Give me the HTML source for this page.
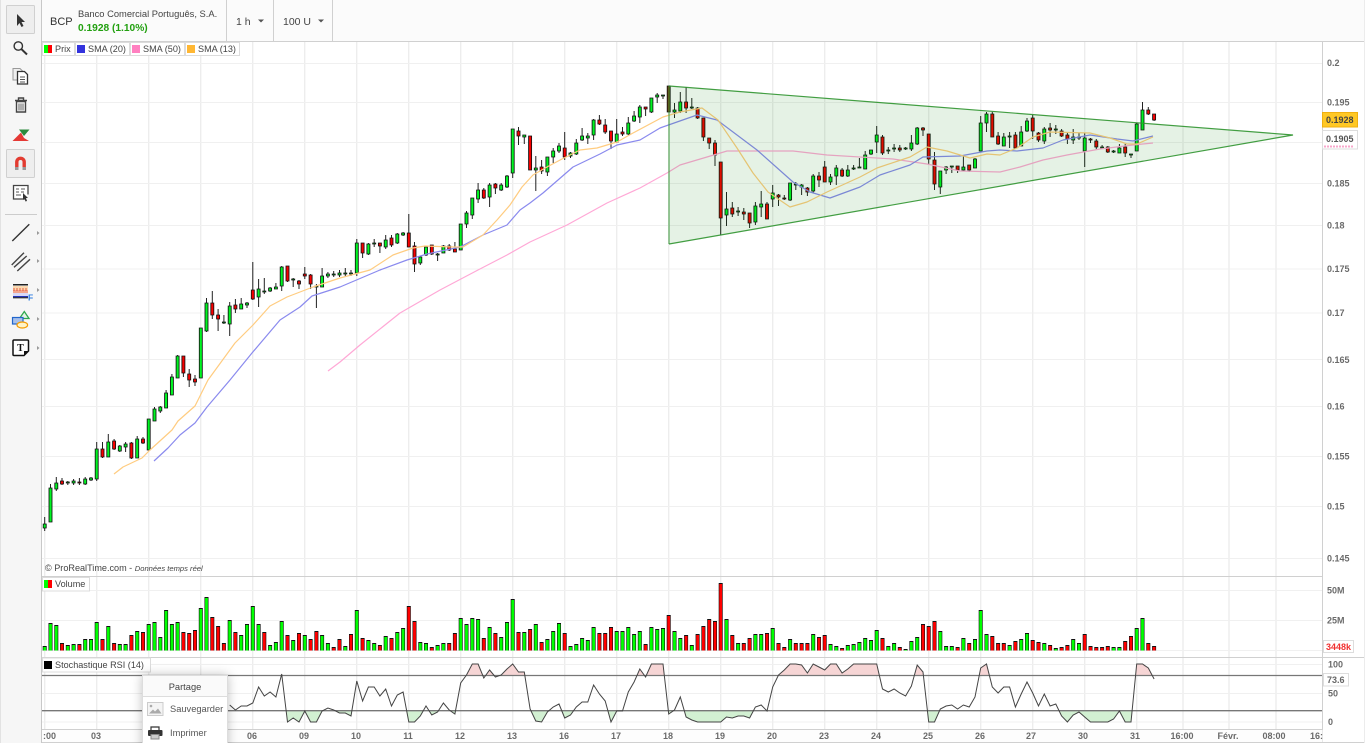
<!DOCTYPE html>
<html><head><meta charset="utf-8"><style>
html,body{margin:0;padding:0;background:#fff;width:1367px;height:753px;overflow:hidden}
#w{position:absolute;left:0;top:0;width:1367px;height:743px;overflow:hidden}
svg{position:absolute;left:0;top:0}
text{font-family:"Liberation Sans",Arial,sans-serif}
.ax{font-size:9px;fill:#6a6a6a;font-weight:bold}
.lg{font-size:9.1px;fill:#444}
#p{position:absolute;left:142px;top:675px;width:84px;height:80px;background:#fff;border:1px solid #ddd;box-shadow:0 0 10px rgba(0,0,0,.25);font-family:"Liberation Sans",Arial,sans-serif;font-size:9.3px;color:#555}
#p .h{height:20px;line-height:22px;text-align:center;background:#fafafa;border-bottom:1px solid #ddd;color:#444}
#p .a{position:absolute;left:27px}
</style></head><body>
<div id="w">
<svg width="1367" height="743" viewBox="0 0 1367 743">
<defs>
<clipPath id="cv"><rect x="42" y="578" width="1280" height="72.5"/></clipPath>
<clipPath id="up"><rect x="42" y="658" width="1280" height="17.5"/></clipPath>
<clipPath id="dn"><rect x="42" y="710.7" width="1280" height="18"/></clipPath>
<path id="st" d="M229.7 693V705L235.4 710L241.2 706L247 706L252.8 703L258.6 687L264.3 696L270.1 692L275.9 697L281.7 674L287.5 722L293.2 718L299 722L304.8 711L310.6 722L316.4 722L322.1 711L327.9 708L333.7 710L339.5 713L345.3 713L351 716L356.8 681L362.6 701L368.4 687L374.2 687L379.9 696L385.7 689L391.5 706L397.3 695L403.1 692L408.8 722L414.5 722L420.3 716L426 706L431.8 715L437.6 712L443.4 703L449.2 710L454.9 714L460.7 683L466.5 675L472.3 664L478.1 664L483.8 678L489.6 670L495.4 677L501.2 675L507 669L512.7 664L518.5 672L524.3 672L530.1 709L535.8 721L541.6 722L547.4 712L553.2 707L559 704L564.7 718L570.5 715L576.3 707L582.1 702L587.8 702L593.6 685L599.4 694L605.2 701L611 722L616.7 711L622.5 711L628.3 692L634.1 682L639.8 669L645.6 677L651.4 664L657.2 664L663 664L668.7 714L674.5 710L680.3 697L686.1 717L691.8 720L697.6 722L703.4 722L709.2 722L715 722L720.7 722L726.5 717L732.3 718L738.1 716L743.8 716L749.6 718L755.4 707L761.2 705L767 711L772.7 687L778.5 675L784.3 670L790.1 664L795.8 664L801.6 665L807.4 673L813.2 664L819 667L824.7 670L830.5 664L836.3 664L842.1 673L847.8 669L853.6 664L859.4 664L865.2 664L871 664L876.7 664L882.5 689L888.3 692L894.1 689L899.8 693L905.6 696L911.4 686L917.2 665L923 672L928.7 722L934.5 722L940.3 709L946.1 706L951.8 705L957.6 709L963.4 705L969.2 707L975 697L980.7 668L986.5 664L992.3 687L998.1 693L1003.8 687L1009.6 687L1015.4 707L1021.2 694L1027 682L1032.7 693L1038.5 706L1044.3 694L1050.1 706L1055.8 704L1061.6 716L1067.4 722L1073.2 715L1079 712L1084.7 717L1090.5 722L1096.3 722L1102.1 722L1107.8 722L1113.6 719L1119.4 711L1125.2 722L1131 722L1136.7 664L1142.5 664L1148.3 668L1154.1 679"/>
<path id="vg" d="M44.7 646V651M50.5 623V651M56.3 625V651M67.8 645V651M73.6 644V651M85.2 639V651M91 639V651M96.7 622V651M108.3 626V651M119.8 644V651M125.6 644V651M137.2 631V651M148.7 624V651M154.5 622V651M160.3 637V651M166.1 610V651M171.9 624V651M177.6 622V651M200.8 608V651M206.5 597V651M229.7 620V651M241.2 635V651M247 624V651M252.8 606V651M258.6 624V651M270.1 645V651M275.9 642V651M281.7 621V651M293.2 640V651M304.8 635V651M322.1 635V651M327.9 643V651M345.3 646V651M356.8 610V651M368.4 640V651M374.2 643V651M385.7 636V651M397.3 632V651M403.1 628V651M420.3 642V651M426 643V651M437.6 645V651M443.4 643V651M460.7 618V651M466.5 624V651M472.3 618V651M478.1 619V651M489.6 627V651M501.2 637V651M507 622V651M512.7 599V651M524.3 632V651M535.8 624V651M547.4 639V651M553.2 631V651M559 623V651M570.5 646V651M576.3 644V651M582.1 638V651M587.8 640V651M593.6 627V651M616.7 631V651M622.5 631V651M628.3 627V651M634.1 634V651M639.8 631V651M651.4 627V651M657.2 629V651M663 628V651M674.5 631V651M680.3 638V651M691.8 645V651M726.5 619V651M738.1 643V651M755.4 634V651M761.2 634V651M772.7 628V651M790.1 639V651M813.2 634V651M830.5 644V651M836.3 646V651M847.8 645V651M853.6 644V651M859.4 642V651M865.2 638V651M871 640V651M876.7 630V651M888.3 646V651M894.1 643V651M905.6 649V651M911.4 641V651M917.2 637V651M940.3 631V651M946.1 646V651M951.8 646V651M963.4 638V651M975 639V651M980.7 610V651M986.5 634V651M1009.6 645V651M1021.2 639V651M1027 633V651M1044.3 643V651M1055.8 648V651M1073.2 639V651M1079 643V651M1113.6 647V651M1119.4 647V651M1136.7 628V651M1142.5 618V651"/>
<path id="vr" d="M62 643V651M79.4 644V651M102.5 639V651M114.1 643V651M131.4 635V651M143 632V651M183.4 632V651M189.2 633V651M195 630V651M212.3 617V651M218.1 626V651M223.9 643V651M235.4 632V651M264.3 632V651M287.5 635V651M299 633V651M310.6 639V651M316.4 631V651M333.7 647V651M339.5 639V651M351 634V651M362.6 638V651M379.9 645V651M391.5 638V651M408.8 606V651M414.5 621V651M431.8 647V651M449.2 643V651M454.9 633V651M483.8 638V651M495.4 633V651M518.5 632V651M530.1 629V651M541.6 642V651M564.7 633V651M599.4 633V651M605.2 633V651M611 627V651M645.6 644V651M668.7 615V651M686.1 635V651M697.6 634V651M703.4 626V651M709.2 619V651M715 621V651M720.7 583V651M732.3 635V651M743.8 643V651M749.6 638V651M767 633V651M778.5 643V651M784.3 647V651M795.8 643V651M801.6 643V651M807.4 643V651M819 637V651M824.7 635V651M842.1 648V651M882.5 638V651M899.8 647V651M923 624V651M928.7 626V651M934.5 621V651M957.6 647V651M969.2 643V651M992.3 636V651M998.1 643V651M1003.8 643V651M1015.4 641V651M1032.7 640V651M1038.5 642V651M1050.1 645V651M1061.6 647V651M1067.4 645V651M1084.7 634V651M1090.5 646V651M1096.3 647V651M1102.1 647V651M1107.8 646V651M1125.2 641V651M1131 636V651M1148.3 643V651M1154.1 646V651"/>
</defs>
<rect width="1367" height="743" fill="#fff"/>
<path stroke="#ededed" stroke-width="1.4" fill="none" d="M44.7 42V729M96.7 42V729M148.7 42V729M200.7 42V729M252.7 42V729M304.7 42V729M356.7 42V729M408.7 42V729M460.7 42V729M512.7 42V729M564.7 42V729M616.7 42V729M668.7 42V729M720.7 42V729M772.7 42V729M824.7 42V729M876.7 42V729M928.7 42V729M980.7 42V729M1032.7 42V729M1084.7 42V729M1136.7 42V729M1183 42V729M1229 42V729M1276 42V729"/>
<path stroke="#f0f0f0" stroke-width="1" fill="none" d="M42 63.5H1322M42 102.5H1322M42 142.5H1322M42 183.5H1322M42 225.5H1322M42 269H1322M42 313H1322M42 359.5H1322M42 406.5H1322M42 456.5H1322M42 506.5H1322M42 558.5H1322M42 590.5H1322M42 620.5H1322M42 650.5H1322M42 664.5H1322M42 693.5H1322M42 722H1322"/>
<g clip-path="url(#cv)">
<use href="#vg" stroke="#111" stroke-width="4" fill="none"/><use href="#vr" stroke="#111" stroke-width="4" fill="none"/>
<use href="#vg" stroke="#00ff00" stroke-width="2.8" fill="none" transform="translate(0 1)"/><use href="#vr" stroke="#ff0000" stroke-width="2.8" fill="none" transform="translate(0 1)"/>
</g>
<path stroke="#222" stroke-width="1" fill="none" d="M44.7 517V531M50.5 484V522M56.3 477V491M62 478V485M67.8 481V485M73.6 479V485M79.4 478V485M85.2 477V485M91 477V481M96.7 442V481M102.5 442V458M108.3 434V457M114.1 439V450M119.8 445V452M125.6 442V452M131.4 442V459M137.2 436V458M143 437V444M154.5 407V421M160.3 406V413M166.1 390V408M171.9 374V395M177.6 355V378M183.4 356V377M189.2 369V387M195 375V386M206.5 298V332M212.3 291V319M218.1 309V331M223.9 315V324M229.7 302V336M235.4 299V313M241.2 298V309M247 302V308M252.8 262V300M258.6 279V307M264.3 278V294M270.1 287V292M275.9 283V289M281.7 266V291M287.5 266V282M293.2 278V287M299 280V289M304.8 267V279M310.6 274V289M316.4 284V308M322.1 268V287M327.9 272V278M333.7 271V277M339.5 270V277M345.3 268V277M351 270V276M356.8 239V276M362.6 243V258M368.4 243V255M374.2 239V247M379.9 243V253M385.7 235V249M391.5 235V247M397.3 233V244M403.1 232V236M408.8 214V247M414.5 242V272M420.3 256V265M426 246V256M431.8 245V255M437.6 253V261M443.4 245V253M449.2 244V251M454.9 242V252M466.5 211V228M472.3 198V219M478.1 183V203M483.8 188V199M489.6 183V207M495.4 183V194M501.2 183V191M507 175V188M512.7 129V178M518.5 127V145M524.3 135V144M535.8 156V191M541.6 160V174M547.4 157V176M553.2 148V163M559 143V153M564.7 132V160M570.5 152V158M576.3 139V155M582.1 128V141M587.8 133V144M593.6 119V140M599.4 115V125M605.2 119V134M611 131V149M616.7 119V143M622.5 127V136M628.3 117V135M634.1 111V122M639.8 105V123M645.6 107V116M651.4 98V113M657.2 93V103M663 95V99M674.5 103V118M680.3 92V113M686.1 87V113M691.8 98V109M697.6 107V119M703.4 118V141M709.2 138V149M715 140V166M720.7 162V235M726.5 192V226M732.3 202V217M738.1 207V216M743.8 208V220M749.6 213V228M755.4 202V225M761.2 191V217M767 202V219M772.7 185V207M778.5 194V206M784.3 195V200M790.1 183V201M795.8 182V190M801.6 184V195M807.4 187V196M813.2 174V193M819 172V187M824.7 161V182M830.5 174V185M836.3 165V185M842.1 168V177M847.8 165V177M853.6 165V170M859.4 158V168M865.2 151V169M871 150V155M876.7 126V153M882.5 135V155M888.3 147V154M894.1 144V152M899.8 145V152M905.6 147V150M911.4 135V151M917.2 127V145M923 127V136M928.7 134V165M934.5 152V190M940.3 171V194M946.1 166V174M951.8 166V173M957.6 166V173M963.4 155V171M969.2 165V172M975 158V168M980.7 116V151M986.5 112V132M992.3 112V137M998.1 132V145M1003.8 133V146M1009.6 132V148M1015.4 132V149M1021.2 126V146M1027 118V132M1032.7 115V139M1038.5 132V142M1044.3 127V144M1050.1 123V137M1055.8 125V134M1061.6 129V137M1067.4 132V144M1073.2 129V144M1079 133V140M1084.7 133V167M1090.5 138V143M1096.3 139V150M1102.1 145V149M1107.8 146V153M1113.6 150V153M1119.4 144V153M1125.2 144V157M1131 154V158M1136.7 123V151M1142.5 102V130M1148.3 107V115M1154.1 114V121"/>
<path fill="#00f522" stroke="#111" stroke-width=".85" d="M44.7 524h1.5v4h-3v-4zM50.5 488h1.5v34h-3v-34zM56.3 483h1.5v6h-3v-6zM67.8 482h1.5v1h-3v-1zM73.6 481h1.5v2h-3v-2zM85.2 479h1.5v5h-3v-5zM91 478h1.5v2h-3v-2zM96.7 449h1.5v30h-3v-30zM108.3 442h1.5v15h-3v-15zM119.8 446h1.5v5h-3v-5zM125.6 444h1.5v3h-3v-3zM137.2 439h1.5v19h-3v-19zM148.7 419h1.5v31h-3v-31zM154.5 409h1.5v12h-3v-12zM160.3 407h1.5v4h-3v-4zM166.1 393h1.5v15h-3v-15zM171.9 377h1.5v18h-3v-18zM177.6 356h1.5v22h-3v-22zM200.8 328h1.5v50h-3v-50zM206.5 303h1.5v28h-3v-28zM223.9 322h1.5v1h-3v-1zM229.7 306h1.5v18h-3v-18zM241.2 304h1.5v5h-3v-5zM247 303h1.5v2h-3v-2zM258.6 289h1.5v8h-3v-8zM264.3 291h1.5v1h-3v-1zM270.1 288h1.5v3h-3v-3zM275.9 287h1.5v2h-3v-2zM281.7 267h1.5v19h-3v-19zM293.2 279h1.5v1h-3v-1zM316.4 286h1.5v1h-3v-1zM322.1 276h1.5v11h-3v-11zM327.9 274h1.5v2h-3v-2zM333.7 274h1.5v1h-3v-1zM339.5 273h1.5v2h-3v-2zM345.3 273h1.5v1h-3v-1zM351 273h1.5v1h-3v-1zM356.8 243h1.5v30h-3v-30zM368.4 244h1.5v10h-3v-10zM374.2 243h1.5v1h-3v-1zM385.7 240h1.5v7h-3v-7zM397.3 234h1.5v9h-3v-9zM403.1 233h1.5v2h-3v-2zM420.3 257h1.5v6h-3v-6zM426 247h1.5v8h-3v-8zM437.6 254h1.5v1h-3v-1zM443.4 246h1.5v7h-3v-7zM460.7 224h1.5v26h-3v-26zM466.5 213h1.5v11h-3v-11zM472.3 198h1.5v17h-3v-17zM478.1 190h1.5v9h-3v-9zM489.6 185h1.5v12h-3v-12zM501.2 185h1.5v5h-3v-5zM507 176h1.5v11h-3v-11zM512.7 129h1.5v44h-3v-44zM524.3 135h1.5v2h-3v-2zM535.8 168h1.5v2h-3v-2zM547.4 157h1.5v15h-3v-15zM553.2 151h1.5v6h-3v-6zM559 146h1.5v5h-3v-5zM570.5 153h1.5v3h-3v-3zM576.3 143h1.5v11h-3v-11zM582.1 136h1.5v4h-3v-4zM587.8 136h1.5v2h-3v-2zM593.6 120h1.5v15h-3v-15zM616.7 134h1.5v8h-3v-8zM628.3 123h1.5v11h-3v-11zM634.1 116h1.5v5h-3v-5zM639.8 107h1.5v10h-3v-10zM651.4 98h1.5v14h-3v-14zM657.2 95h1.5v2h-3v-2zM663 95h1.5v1h-3v-1zM674.5 110h1.5v2h-3v-2zM680.3 102h1.5v9h-3v-9zM691.8 107h1.5v1h-3v-1zM726.5 209h1.5v6h-3v-6zM738.1 211h1.5v1h-3v-1zM755.4 206h1.5v16h-3v-16zM761.2 204h1.5v3h-3v-3zM772.7 193h1.5v6h-3v-6zM790.1 183h1.5v17h-3v-17zM795.8 184h1.5v1h-3v-1zM801.6 185h1.5v2h-3v-2zM813.2 176h1.5v15h-3v-15zM830.5 177h1.5v5h-3v-5zM836.3 168h1.5v8h-3v-8zM847.8 170h1.5v6h-3v-6zM853.6 168h1.5v1h-3v-1zM859.4 167h1.5v1h-3v-1zM865.2 155h1.5v14h-3v-14zM871 150h1.5v4h-3v-4zM876.7 135h1.5v7h-3v-7zM888.3 150h1.5v1h-3v-1zM894.1 148h1.5v1h-3v-1zM905.6 148h1.5v1h-3v-1zM911.4 143h1.5v6h-3v-6zM917.2 128h1.5v16h-3v-16zM940.3 171h1.5v16h-3v-16zM946.1 167h1.5v3h-3v-3zM951.8 166h1.5v1h-3v-1zM963.4 167h1.5v3h-3v-3zM975 159h1.5v9h-3v-9zM980.7 123h1.5v28h-3v-28zM986.5 114h1.5v9h-3v-9zM1003.8 137h1.5v9h-3v-9zM1009.6 136h1.5v1h-3v-1zM1021.2 132h1.5v14h-3v-14zM1027 121h1.5v10h-3v-10zM1044.3 129h1.5v12h-3v-12zM1055.8 129h1.5v1h-3v-1zM1073.2 137h1.5v3h-3v-3zM1079 137h1.5v1h-3v-1zM1084.7 138h1.5v13h-3v-13zM1102.1 147h1.5v1h-3v-1zM1113.6 151h1.5v1h-3v-1zM1119.4 148h1.5v5h-3v-5zM1131 154h1.5v1h-3v-1zM1136.7 124h1.5v27h-3v-27zM1142.5 110h1.5v20h-3v-20z"/>
<path fill="#f80000" stroke="#111" stroke-width=".85" d="M62 481h1.5v3h-3v-3zM79.4 482h1.5v1h-3v-1zM102.5 449h1.5v8h-3v-8zM114.1 441h1.5v8h-3v-8zM131.4 443h1.5v15h-3v-15zM143 439h1.5v4h-3v-4zM183.4 356h1.5v17h-3v-17zM189.2 374h1.5v6h-3v-6zM195 379h1.5v3h-3v-3zM212.3 303h1.5v12h-3v-12zM218.1 315h1.5v4h-3v-4zM235.4 305h1.5v4h-3v-4zM252.8 290h1.5v9h-3v-9zM287.5 266h1.5v15h-3v-15zM299 281h1.5v3h-3v-3zM304.8 274h1.5v2h-3v-2zM310.6 275h1.5v9h-3v-9zM362.6 243h1.5v10h-3v-10zM379.9 243h1.5v3h-3v-3zM391.5 238h1.5v7h-3v-7zM408.8 233h1.5v14h-3v-14zM414.5 246h1.5v18h-3v-18zM431.8 245h1.5v9h-3v-9zM449.2 246h1.5v4h-3v-4zM454.9 249h1.5v3h-3v-3zM483.8 190h1.5v8h-3v-8zM495.4 184h1.5v4h-3v-4zM518.5 131h1.5v5h-3v-5zM530.1 136h1.5v34h-3v-34zM541.6 167h1.5v4h-3v-4zM564.7 148h1.5v9h-3v-9zM599.4 120h1.5v4h-3v-4zM605.2 125h1.5v7h-3v-7zM611 131h1.5v10h-3v-10zM622.5 132h1.5v2h-3v-2zM645.6 107h1.5v2h-3v-2zM686.1 102h1.5v6h-3v-6zM697.6 108h1.5v10h-3v-10zM703.4 118h1.5v19h-3v-19zM709.2 138h1.5v5h-3v-5zM715 143h1.5v12h-3v-12zM720.7 162h1.5v56h-3v-56zM732.3 208h1.5v6h-3v-6zM743.8 212h1.5v2h-3v-2zM749.6 213h1.5v10h-3v-10zM767 204h1.5v15h-3v-15zM778.5 195h1.5v2h-3v-2zM784.3 198h1.5v1h-3v-1zM807.4 188h1.5v4h-3v-4zM819 176h1.5v4h-3v-4zM824.7 167h1.5v15h-3v-15zM842.1 170h1.5v6h-3v-6zM882.5 137h1.5v16h-3v-16zM899.8 148h1.5v2h-3v-2zM923 128h1.5v2h-3v-2zM928.7 134h1.5v25h-3v-25zM934.5 160h1.5v24h-3v-24zM957.6 166h1.5v4h-3v-4zM969.2 165h1.5v5h-3v-5zM992.3 114h1.5v23h-3v-23zM998.1 136h1.5v8h-3v-8zM1015.4 135h1.5v13h-3v-13zM1032.7 118h1.5v13h-3v-13zM1038.5 133h1.5v7h-3v-7zM1050.1 128h1.5v2h-3v-2zM1061.6 131h1.5v5h-3v-5zM1067.4 135h1.5v4h-3v-4zM1090.5 139h1.5v1h-3v-1zM1096.3 141h1.5v6h-3v-6zM1107.8 147h1.5v5h-3v-5zM1125.2 147h1.5v6h-3v-6zM1148.3 110h1.5v4h-3v-4zM1154.1 114h1.5v6h-3v-6z"/>
<path fill="#7a3a10" stroke="#111" stroke-width=".85" d="M668.7 86h1.5v26h-3v-26z"/>
<g fill="none" stroke-width="1.2" stroke-linejoin="round">
<polyline stroke="#ffa8d6" points="328,371 340,362 360,345 400,313 440,290 478,270 507,255 530,242 567,225 607,203 640,188 667,173 680,165 707,157 727,151 760,151 793,151 827,155 893,159 927,164 960,171 1000,172 1020,167 1043,160 1067,155 1100,149 1133,145 1153,143"/>
<polyline stroke="#8a8aee" points="154,461 168,448 180,435 195,423 207,407 230,380 252,353 280,320 300,307 312,296 340,287 380,270 407,260 427,254 460,247 483,235 507,225 520,210 530,203 543,193 573,167 600,154 617,145 640,140 660,128 677,122 697,115 717,120 757,150 793,182 810,192 830,198 860,187 880,175 910,165 923,157 960,156 987,151 1000,150 1017,151 1043,148 1063,140 1090,135 1117,139 1133,141 1153,136"/>
<polyline stroke="#ffcc80" points="114,474 123,467 142,458 150,450 172,430 178,421 195,406 208,380 235,343 253,325 270,306 287,297 313,287 340,278 370,270 393,255 413,248 425,246 453,247 463,247 483,235 497,220 510,205 522,187 533,175 547,167 562,159 580,150 597,148 617,142 633,133 663,117 680,112 702,108 718,120 737,148 753,173 768,192 790,207 807,202 827,192 860,177 877,168 910,157 927,147 947,151 970,158 987,154 1000,155 1017,148 1033,137 1050,132 1090,133 1110,138 1127,144 1137,144 1153,137"/>
</g>
<path d="M669 86L1293 135L669 244z" fill="rgba(0,128,0,.1)"/>
<path d="M669 86L1293 135L669 244" fill="none" stroke="#2f932f" stroke-width="1.2" opacity=".9"/>
<path d="M669 86V244" stroke="#2f932f" stroke-width="2" opacity=".45" fill="none"/>
<use href="#st" clip-path="url(#up)" fill="#f6d5d5"/>
<use href="#st" clip-path="url(#dn)" fill="#d2f0d2"/>
<path d="M42 675.5H1322M42 710.7H1322" stroke="#777" stroke-width="1.3" fill="none"/>
<polyline fill="none" stroke="#444" stroke-width="1" points="229.7,705 235.4,710 241.2,706 247,706 252.8,703 258.6,687 264.3,696 270.1,692 275.9,697 281.7,674 287.5,722 293.2,718 299,722 304.8,711 310.6,722 316.4,722 322.1,711 327.9,708 333.7,710 339.5,713 345.3,713 351,716 356.8,681 362.6,701 368.4,687 374.2,687 379.9,696 385.7,689 391.5,706 397.3,695 403.1,692 408.8,722 414.5,722 420.3,716 426,706 431.8,715 437.6,712 443.4,703 449.2,710 454.9,714 460.7,683 466.5,675 472.3,664 478.1,664 483.8,678 489.6,670 495.4,677 501.2,675 507,669 512.7,664 518.5,672 524.3,672 530.1,709 535.8,721 541.6,722 547.4,712 553.2,707 559,704 564.7,718 570.5,715 576.3,707 582.1,702 587.8,702 593.6,685 599.4,694 605.2,701 611,722 616.7,711 622.5,711 628.3,692 634.1,682 639.8,669 645.6,677 651.4,664 657.2,664 663,664 668.7,714 674.5,710 680.3,697 686.1,717 691.8,720 697.6,722 703.4,722 709.2,722 715,722 720.7,722 726.5,717 732.3,718 738.1,716 743.8,716 749.6,718 755.4,707 761.2,705 767,711 772.7,687 778.5,675 784.3,670 790.1,664 795.8,664 801.6,665 807.4,673 813.2,664 819,667 824.7,670 830.5,664 836.3,664 842.1,673 847.8,669 853.6,664 859.4,664 865.2,664 871,664 876.7,664 882.5,689 888.3,692 894.1,689 899.8,693 905.6,696 911.4,686 917.2,665 923,672 928.7,722 934.5,722 940.3,709 946.1,706 951.8,705 957.6,709 963.4,705 969.2,707 975,697 980.7,668 986.5,664 992.3,687 998.1,693 1003.8,687 1009.6,687 1015.4,707 1021.2,694 1027,682 1032.7,693 1038.5,706 1044.3,694 1050.1,706 1055.8,704 1061.6,716 1067.4,722 1073.2,715 1079,712 1084.7,717 1090.5,722 1096.3,722 1102.1,722 1107.8,722 1113.6,719 1119.4,711 1125.2,722 1131,722 1136.7,664 1142.5,664 1148.3,668 1154.1,679"/>
<rect x="42" y="729.5" width="1280" height="13" fill="#fdfdfd"/>
<path stroke="#d0d0d0" stroke-width="1" fill="none" d="M42 576.5H1322M42 657.5H1364M42 729.5H1322M42 742.5H1364M1322.5 42V742"/>
<rect x="0" y="0" width="41" height="743" fill="#f6f6f6"/>
<rect x="0" y="0" width="1" height="743" fill="#e2e2e2"/>
<rect x="41" y="0" width="1" height="743" fill="#c8c8c8"/>
<rect x="6.5" y="5.5" width="28" height="28" fill="#eee" stroke="#d0d0d0" rx="1"/>
<rect x="6.5" y="149.5" width="28" height="28" fill="#eee" stroke="#d0d0d0" rx="1"/>
<path fill="#333" d="M17 14l8 8h-3.5l2 4-2 1-2-4-2.5 3z"/>
<circle cx="18.3" cy="46" r="4.2" fill="none" stroke="#333" stroke-width="1.4"/><path d="M21.5 49.2L27 54.5" stroke="#333" stroke-width="2"/>
<path d="M19 80h-6V68.5h7l3 3" fill="#eee" stroke="#999" stroke-width="1"/>
<path d="M17.5 71.5h7l3 3v9.5h-10z" fill="#fff" stroke="#333" stroke-width="1.3"/><path d="M20 77h5M20 79.5h5M20 82h5" stroke="#555" stroke-width=".9"/>
<path d="M15 100.5h12M18.5 100v-2h5v2" fill="none" stroke="#444" stroke-width="1.4"/><path d="M16.5 101.5h9v10.5h-9z" fill="none" stroke="#444" stroke-width="1.4"/><path d="M19 103.5v7M21 103.5v7M23 103.5v7" stroke="#666" stroke-width="1"/>
<path d="M19 129.5H29.5L24 136z" fill="#2c8a3e"/><path d="M12.5 141L21 132.5L24 138L29 141z" fill="#e53935"/>
<path d="M16.8 167v-5a3.7 3.7 0 0 1 7.4 0v5" fill="none" stroke="#e23b30" stroke-width="3.4"/><rect x="15" y="167" width="3.5" height="3" fill="#999"/><rect x="22.5" y="167" width="3.5" height="3" fill="#999"/>
<path d="M25 199h-11.500v-13.500h14.500v9" fill="#fff" stroke="#444" stroke-width="1.3"/><path d="M16 189h3M21 189h4M16 192h3M21 192h3M16 195h5" stroke="#555" stroke-width="1"/><path d="M23 193l5 5h-2l1 3-1.500.5-1-3-1.500 1.500z" fill="#333"/>
<path d="M5 214.5H37" stroke="#ccc" stroke-width="1"/>
<path d="M12.3 241L29.3 224.3" stroke="#333" stroke-width="1.4"/>
<path d="M11.7 265L24 252.7M14 267.3L26.7 256M17.3 271L30 259.3" stroke="#444" stroke-width="1.4"/>
<rect x="13" y="284" width="15" height="1.5" fill="#222"/><rect x="13" y="286" width="15" height="4" fill="#fcd9b0"/><rect x="13" y="290" width="15" height="3" fill="#f3a58c"/><path d="M14 288v3M17 288v3M20 288v3M23 288v3M26 288v3" stroke="#e0503a" stroke-width=".9"/><rect x="13" y="293" width="15" height="3" fill="#d8d8f8"/><rect x="13" y="296" width="15" height="1.3" fill="#2233bb"/><rect x="13" y="297.3" width="15" height="1" fill="#111"/>
<text x="28" y="300.5" font-size="8.5" font-weight="bold" fill="#2a7ae0">F</text>
<path d="M19.5 318.5L24.3 311.5L29 318.5z" fill="#e4f4e4" stroke="#2fa84f" stroke-width="1.3"/>
<rect x="12.5" y="317.5" width="10.5" height="6.5" fill="#a7c0ea" stroke="#2266cc" stroke-width="1.2"/>
<ellipse cx="22.3" cy="325" rx="5.3" ry="3" fill="#fff4c8" stroke="#f49b00" stroke-width="1.2"/>
<path d="M24 355.500H14a1 1 0 0 1-1-1V341a1 1 0 0 1 1-1h13.500a1 1 0 0 1 1 1v10z" fill="#fff" stroke="#111" stroke-width="1.5"/><path d="M24 355.500v-4.500h4.500z" fill="#111"/>
<text x="20.5" y="351" font-size="10" font-weight="bold" text-anchor="middle" style="font-family:'Liberation Serif',serif" fill="#111">T</text>
<path d="M37 231l2.500 2-2.500 2zM37 259l2.500 2-2.500 2zM37 288l2.500 2-2.500 2zM37 317l2.500 2-2.500 2zM37 346l2.500 2-2.500 2z" fill="#999"/>
<rect x="42" y="0" width="1322" height="41" fill="#fbfbfb"/>
<path d="M42 41.500H1364M226.500 0V41M273.500 0V41M332.500 0V41" stroke="#d0d0d0" stroke-width="1" fill="none"/>
<text x="50" y="25" font-size="11" fill="#333">BCP</text>
<text x="78" y="17" font-size="9.35" fill="#444">Banco Comercial Português, S.A.</text>
<text x="78" y="31" font-size="10.2" font-weight="bold" fill="#22a010">0.1928 (1.10%)</text>
<text x="236" y="25" font-size="10.5" fill="#444">1 h</text><path d="M258 19.500h6l-3 3z" fill="#555"/>
<text x="283" y="25" font-size="10.5" fill="#444">100 U</text><path d="M318 19.500h6l-3 3z" fill="#555"/>
<g fill="#fff" stroke="#dcdcdc"><rect x="42.5" y="42.5" width="32" height="13"/><rect x="75.5" y="42.5" width="54" height="13"/><rect x="130.5" y="42.5" width="54" height="13"/><rect x="185.5" y="42.5" width="54" height="13"/><rect x="42.5" y="577.5" width="47" height="13.5"/><rect x="42.5" y="658" width="108" height="14"/></g>
<rect x="44" y="45" width="4" height="8" fill="#0f0"/><rect x="48" y="45" width="4" height="8" fill="#f00"/>
<rect x="77" y="45" width="8" height="8" fill="#3333dd"/><rect x="132" y="45" width="8" height="8" fill="#ff80c0"/><rect x="187" y="45" width="8" height="8" fill="#ffb733"/>
<text class="lg" x="55" y="52">Prix</text><text class="lg" x="88" y="52">SMA (20)</text><text class="lg" x="143" y="52">SMA (50)</text><text class="lg" x="198" y="52">SMA (13)</text>
<rect x="44" y="580" width="4" height="8" fill="#0f0"/><rect x="48" y="580" width="4" height="8" fill="#f00"/><text class="lg" x="55" y="587">Volume</text>
<rect x="44" y="661" width="8" height="8" fill="#000"/><text class="lg" x="55" y="668">Stochastique RSI (14)</text>
<text x="45" y="571" font-size="9.1" fill="#444">© ProRealTime.com - <tspan font-size="7.6" font-style="italic">Données temps réel</tspan></text>
<text class="ax" x="1327" y="66">0.2</text><text class="ax" x="1327" y="105.5">0.195</text><text class="ax" x="1327" y="186.5">0.185</text><text class="ax" x="1327" y="228.5">0.18</text><text class="ax" x="1327" y="272">0.175</text><text class="ax" x="1327" y="316">0.17</text><text class="ax" x="1327" y="363">0.165</text><text class="ax" x="1327" y="409.5">0.16</text><text class="ax" x="1327" y="459.5">0.155</text><text class="ax" x="1327" y="509.5">0.15</text><text class="ax" x="1327" y="561.5">0.145</text><text class="ax" x="1327" y="593.5">50M</text><text class="ax" x="1327" y="623.5">25M</text><text class="ax" x="1328" y="667.5">100</text><text class="ax" x="1328" y="696.5">50</text><text class="ax" x="1328" y="725">0</text>
<rect x="1322.5" y="112.5" width="35" height="14.5" fill="#ffc825" stroke="#f0b010"/><text x="1326" y="123" font-size="9" font-weight="bold" fill="#444">0.1928</text>
<path d="M1324 146.5H1354" stroke="#f8a8cc" stroke-width="2" stroke-dasharray="2 1"/>
<rect x="1322.5" y="130.5" width="35" height="18.5" fill="none" stroke="#ddd"/><rect x="1323" y="131" width="34" height="14" fill="#fff"/><text x="1326" y="142" font-size="9" font-weight="bold" fill="#555">0.1905</text>
<rect x="1323.5" y="640.5" width="30" height="12" fill="#fff" stroke="#ddd"/><text x="1326" y="650" font-size="9" font-weight="bold" fill="#f03030">3448k</text>
<rect x="1323.5" y="673.5" width="25" height="12.5" fill="#fff" stroke="#ddd"/><text x="1327" y="683" font-size="9" font-weight="bold" fill="#666">73.6</text>
<g text-anchor="middle"><text class="ax" x="96" y="739">03</text><text class="ax" x="252" y="739">06</text><text class="ax" x="304" y="739">09</text><text class="ax" x="356" y="739">10</text><text class="ax" x="408" y="739">11</text><text class="ax" x="460" y="739">12</text><text class="ax" x="512" y="739">13</text><text class="ax" x="564" y="739">16</text><text class="ax" x="616" y="739">17</text><text class="ax" x="668" y="739">18</text><text class="ax" x="720" y="739">19</text><text class="ax" x="772" y="739">20</text><text class="ax" x="824" y="739">23</text><text class="ax" x="876" y="739">24</text><text class="ax" x="928" y="739">25</text><text class="ax" x="980" y="739">26</text><text class="ax" x="1031" y="739">27</text><text class="ax" x="1083" y="739">30</text><text class="ax" x="1135" y="739">31</text><text class="ax" x="1182" y="739">16:00</text><text class="ax" x="1228" y="739">Févr.</text><text class="ax" x="1274" y="739">08:00</text></g>
<text class="ax" x="1310" y="739">16:0</text>
<text class="ax" x="43" y="739">:00</text>
<rect x="1322.5" y="730" width="41" height="12" fill="#fff"/>
<rect x="1364" y="0" width="3" height="743" fill="#fff"/>
<path d="M1364.5 0V743" stroke="#ececec"/>
</svg>
<div id="p">
<div class="h">Partage</div>
<div class="a" style="top:28px">Sauvegarder</div>
<div class="a" style="top:52px">Imprimer</div>
<svg width="24" height="60" style="left:0;top:21px" viewBox="0 0 24 60">
<rect x="4.5" y="5.5" width="15.5" height="13" fill="#f4f4f4" stroke="#ccc"/><circle cx="8" cy="9" r="1.3" fill="#aaa"/><path d="M6 16.5l4-4 2 2 3-3 3.500 5z" fill="#aaa"/>
<path d="M8 33.5v-3.500h8v3.500" fill="none" stroke="#333" stroke-width="1.2"/><rect x="5" y="33" width="14.5" height="6" rx="1" fill="#333"/><rect x="8" y="37.5" width="8" height="4.5" fill="#ccc" stroke="#888"/>
</svg>
</div>
</div>
</body></html>
